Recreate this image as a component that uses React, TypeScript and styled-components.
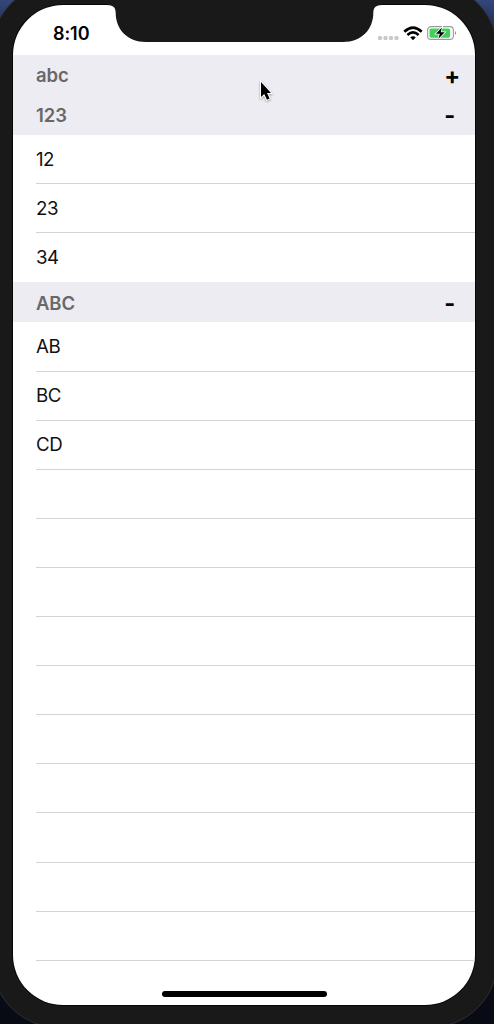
import React from 'react';
import styled, { createGlobalStyle } from 'styled-components';

const GlobalStyle = createGlobalStyle`
  html, body { margin: 0; overflow: hidden; }
  * { box-sizing: border-box; }
`;

const Desktop = styled.main`
  position: relative;
  width: 494px;
  height: 1024px;
  overflow: hidden;
  display: flow-root;
  background: linear-gradient(180deg, #35477a 0, #1c2c50 30px, #0b0e1c 900px, #080a14 100%);
  font-family: Inter, "Liberation Sans", sans-serif;
`;

const Phone = styled.div`
  width: 507px;
  height: 1045px;
  margin: -17px 0 0 -9px;
  padding: 21px 22px 22px 22px;
  border-radius: 68px;
  border: 1px solid #303033;
  background: #191919;
`;

const Screen = styled.div`
  width: 461.8px;
  height: 1000.4px;
  margin-left: -0.6px;
  border-radius: 50px;
  overflow: hidden;
  background: #fff;
  box-shadow: 0 0 0 1px #070707;
  display: flex;
  flex-direction: column;
`;

const StatusBar = styled.header`
  flex: none;
  height: 49.5px;
  padding: 5px 18px 0 39.5px;
  display: flex;
  align-items: center;
  justify-content: space-between;
`;

const Clock = styled.span`
  font-size: 18px;
  font-weight: 600;
  line-height: 24px;
  letter-spacing: -0.05px;
  padding-top: 3px;
`;

const Notch = styled.svg`
  position: absolute;
  left: 108px;
  top: 0;
`;

const StatusIcons = styled.svg`
  display: block;
  margin-top: 3px;
`;

const SectionHeader = styled.button`
  flex: none;
  width: 100%;
  height: 40.2px;
  border: 0;
  padding: 1px 0 0 22.5px;
  display: flex;
  align-items: center;
  justify-content: space-between;
  background: #edecf2;
  color: #68686b;
  font: 580 18.5px/24px Inter, "Liberation Sans", sans-serif;
  text-align: left;
`;

const Toggle = styled.span`
  width: 31px;
  padding-top: 2px;
  color: #050505;
  font-size: 23.5px;
  font-weight: 700;
  line-height: 24px;
`;

const Row = styled.div`
  flex: none;
  height: 49.12px;
  padding-top: 0.5px;
  margin-left: 22.5px;
  display: flex;
  align-items: center;
  font-size: 18.7px;
  color: #111;
  letter-spacing: -0.4px;
  border-bottom: 1px solid #d4d4d5;
  &:has(+ button) { border-color: transparent; }
`;

const HomeBar = styled.div`
  position: absolute;
  left: 162px;
  top: 991px;
  width: 165px;
  height: 5.5px;
  border-radius: 3px;
  background: #000;
`;

const Cursor = styled.svg`
  position: absolute;
  left: 257px;
  top: 78px;
`;

const sections = [
  { title: 'abc', open: false, items: [] as string[] },
  { title: '123', open: true, items: ['12', '23', '34'] },
  { title: 'ABC', open: true, items: ['AB', 'BC', 'CD'] },
];

export default function App() {
  return (
    <Desktop>
      <GlobalStyle />
      <Phone>
        <Screen>
          <StatusBar>
            <Clock>8:10</Clock>
            <StatusIcons width="80" height="20" viewBox="0 0 80 20">
              <g fill="#c9c9c9">
                {[1, 6.5, 12, 17.5].map(x => <rect key={x} x={x} y="12" width="4" height="4" rx="1.2" />)}
              </g>
              <g fill="none" stroke="#000" strokeWidth="2.7">
                <path d="M27.3 7.7Q36 -.5 44.7 7.7" />
                <path d="M30.4 10.9Q36 5.9 41.6 10.9" />
              </g>
              <path d="M33.2 13.3Q36 11 38.8 13.3L36 16.2Z" />
              <rect x="50.6" y="2.6" width="25.8" height="12.8" rx="3.5" fill="#fff" stroke="#9a9a9a" strokeWidth="1.1" />
              <rect x="52.5" y="4.5" width="20.6" height="9.2" rx="1.6" fill="#3fd15b" />
              <path d="M78 7Q80 9 78 11Z" fill="#888" />
              <path d="M64.9 3.5L58.9 9.8H62.8L61.4 14.8L67.7 8.3H63.7Z" fill="#000" stroke="#fff" strokeWidth="1.5" paintOrder="stroke" />
            </StatusIcons>
          </StatusBar>
          {sections.map(section => (
            <React.Fragment key={section.title}>
              <SectionHeader>
                {section.title}
                <Toggle>{section.open ? '-' : '+'}</Toggle>
              </SectionHeader>
              {section.items.map(item => <Row key={item}>{item}</Row>)}
            </React.Fragment>
          ))}
          {Array.from({ length: 10 }, (_, i) => <Row key={i} />)}
        </Screen>
      </Phone>
      <Notch width="273" height="44" viewBox="0 0 273 44">
        <path d="M0 0V5.3C5 5.3 7.7 7.5 7.7 13C7.7 29 19 42 38 42H235C254 42 265.3 29 265.3 13C265.3 7.5 268 5.3 273 5.3V0Z" fill="#191919" />
      </Notch>
      <HomeBar />
      <Cursor width="18" height="26" viewBox="0 0 18 26">
        <path d="M4 4V19L7.2 16L10 21.7L12.6 20.4L10 15H14Z" fill="#000" stroke="#fff" strokeWidth="2" paintOrder="stroke" style={{ filter: 'drop-shadow(0 1px 1px #0005)' }} />
      </Cursor>
    </Desktop>
  );
}
